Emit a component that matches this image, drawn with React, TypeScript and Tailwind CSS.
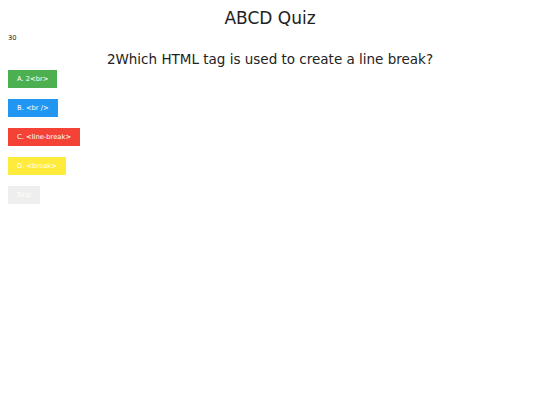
import React from 'react';

const options = [
  { label: 'A. 2<br>', className: 'bg-[#4caf50] text-white' },
  { label: 'B. <br />', className: 'bg-[#2196f3] text-white' },
  { label: 'C. <line-break>', className: 'bg-[#f44336] text-white' },
  { label: 'D. <break>', className: 'bg-[#ffeb3b] text-white' },
];

export default function App() {
  return (
    <div className="min-h-[405px] bg-white font-['DejaVu_Sans',sans-serif] text-[#222]">
      <h1 className="pt-[7px] text-center text-[17px] leading-[22px]">ABCD Quiz</h1>
      <div className="mt-[3px] px-2 text-[6.75px] leading-[12px]">30</div>
      <h2 className="mt-[6px] text-center text-[13.5px] leading-[18px]">
        2Which HTML tag is used to create a line break?
      </h2>
      <div className="mt-[2px] flex flex-col items-start gap-[11px] px-2">
        {options.map((o) => (
          <button
            key={o.label}
            type="button"
            className={`h-[18px] px-[9px] text-[6.75px] leading-[18px] ${o.className}`}
          >
            {o.label}
          </button>
        ))}
        <button
          type="button"
          className="h-[18px] px-[9px] text-[6.75px] leading-[18px] bg-[#eeeeee] text-white"
        >
          Skip
        </button>
      </div>
    </div>
  );
}
